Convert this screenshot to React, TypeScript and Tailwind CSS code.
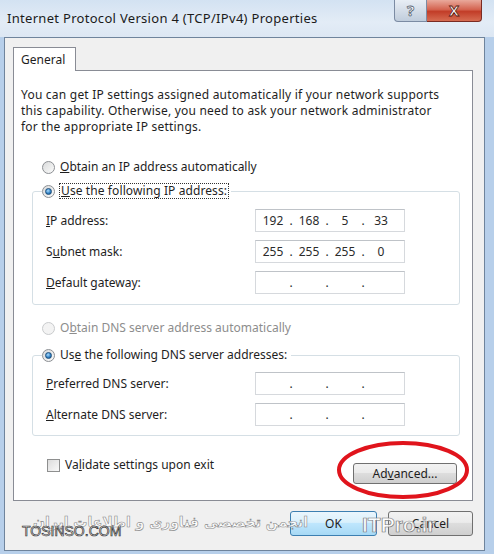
import React from "react";

function Radio({ checked, disabled }: { checked?: boolean; disabled?: boolean }) {
  return (
    <span
      className={
        disabled
          ? "relative inline-block size-[13px] shrink-0 rounded-full border border-[#c9cbcd] bg-[#f3f3f3]"
          : "relative inline-block size-[13px] shrink-0 rounded-full border border-[#8c8f93] bg-[linear-gradient(135deg,#d9dadb,#fbfbfb)]"
      }
    >
      {checked && (
        <span className="absolute left-[2px] top-[2px] size-[7px] rounded-full border border-[#1d4f7c] bg-[radial-gradient(circle_at_40%_35%,#a9dcff,#2c7cc0_60%,#174a78)]" />
      )}
    </span>
  );
}

function IpField({ parts }: { parts: string[] }) {
  return (
    <div className="flex h-[23px] w-[150px] items-center border border-[#d6d9dd] border-t-[#bfc3c8] bg-white pl-[2px] text-[12px] text-[#2b2b2b]">
      {parts.map((p, i) => (
        <React.Fragment key={i}>
          <span className="w-[30px] text-center">{p}</span>
          {i < 3 && <span className="w-[6px] text-center">.</span>}
        </React.Fragment>
      ))}
    </div>
  );
}

function FieldRow({ label, u, rest, parts }: { label: string; u: string; rest: string; parts: string[] }) {
  return (
    <div className="flex h-[23px] items-center">
      <div className="w-[209px] text-[12px] text-[#1e1e1e]">
        {label}
        <span className="underline">{u}</span>
        {rest}
      </div>
      <IpField parts={parts} />
    </div>
  );
}

function WinButton({ children, primary, className }: { children: React.ReactNode; primary?: boolean; className: string }) {
  return (
    <div
      className={
        (primary
          ? "border-[#3c7fb1] bg-[linear-gradient(180deg,#eaf6fd_0%,#d9f0fc_45%,#bee6fd_50%,#a7d9f5_100%)] "
          : "border-[#707070] bg-[linear-gradient(180deg,#f2f2f2_0%,#ebebeb_45%,#dddddd_50%,#cfcfcf_100%)] ") +
        "flex items-center justify-center rounded-[3px] border text-[12px] text-[#1e1e1e] " +
        className
      }
    >
      {children}
    </div>
  );
}

export default function App() {
  const empty = ["", "", "", ""];
  return (
    <div className="relative h-[554px] w-[494px] overflow-hidden bg-[#b7cfea] font-['Noto_Sans',sans-serif]">
      {/* title bar */}
      <div className="flex h-[37px] items-start bg-[linear-gradient(180deg,#d3e2f2_0%,#e3ecf6_60%,#dce7f3_100%)] pl-[4px]">
        <div className="pl-[3px] pt-[9px] text-[13px] tracking-[0.3px] text-[#1b1b1b]">Internet Protocol Version 4 (TCP/IPv4) Properties</div>
        <div className="ml-auto mr-[12px] flex">
          <div className="flex h-[22px] w-[33px] items-center justify-center rounded-bl-[4px] border border-t-0 border-[#7b8ba3] bg-[linear-gradient(180deg,#e8eef5_0%,#d4dde8_50%,#c0cddc_100%)] text-[15px] font-bold text-white [-webkit-text-stroke:0.8px_#5b6674]">
            ?
          </div>
          <div className="flex h-[22px] w-[55px] items-center justify-center rounded-br-[4px] border border-l-0 border-t-0 border-[#7a2b22] bg-[linear-gradient(180deg,#e9a99b_0%,#d46450_45%,#c23d28_55%,#d66c52_100%)] text-[15px] font-bold text-white [-webkit-text-stroke:0.8px_#5a1a12]">
            X
          </div>
        </div>
      </div>

      {/* client area */}
      <div className="ml-[4px] mr-[9px] h-[514px] border border-[#6f849c] bg-[#f0f0f0] pl-[8px] pt-[9px]">
        {/* tab */}
        <div className="relative z-10 -mb-px flex h-[24px] w-[63px] items-start border border-b-0 border-[#898c95] bg-white pl-[7px] pt-[3px] text-[12px] text-[#1e1e1e]">
          General
        </div>

        {/* panel */}
        <div className="h-[431px] w-[460px] border border-[#898c95] bg-white">
          <div className="pl-[7px] pt-[16px] text-[12px] leading-[16px] tracking-[0.22px] text-[#1e1e1e]">
            You can get IP settings assigned automatically if your network supports
            <br />
            this capability. Otherwise, you need to ask your network administrator
            <br />
            for the appropriate IP settings.
          </div>

          <div className="ml-[28px] mt-[24px] flex h-[16px] items-center gap-[5px] text-[12px] text-[#1e1e1e]">
            <Radio />
            <span>
              <span className="underline">O</span>btain an IP address automatically
            </span>
          </div>

          <div className="relative z-10 ml-[28px] mt-[8px] flex h-[16px] w-fit items-center gap-[4px] bg-white pr-[2px] text-[12px] text-[#1e1e1e]">
            <Radio checked />
            <span className="border border-dotted border-[#333] px-[1px] leading-[14px] tracking-[0.1px]">
              <span className="underline">U</span>se the following IP address:
            </span>
          </div>
          <div className="-mt-[8px] ml-[18px] flex h-[114px] w-[428px] flex-col gap-[8px] rounded-[3px] border border-[#d5dfe5] pl-[13px] pt-[17px]">
            <FieldRow label="" u="I" rest="P address:" parts={["192", "168", "5", "33"]} />
            <FieldRow label="S" u="u" rest="bnet mask:" parts={["255", "255", "255", "0"]} />
            <FieldRow label="" u="D" rest="efault gateway:" parts={empty} />
          </div>

          <div className="ml-[28px] mt-[15px] flex h-[16px] items-center gap-[5px] text-[12px] text-[#8d8d8d]">
            <Radio disabled />
            <span>
              O<span className="underline">b</span>tain DNS server address automatically
            </span>
          </div>

          <div className="relative z-10 ml-[28px] mt-[11px] flex h-[16px] w-fit items-center gap-[5px] bg-white pr-[4px] text-[12px] text-[#1e1e1e]">
            <Radio checked />
            <span>
              Us<span className="underline">e</span> the following DNS server addresses:
            </span>
          </div>
          <div className="-mt-[8px] ml-[18px] flex h-[81px] w-[428px] flex-col gap-[8px] rounded-[3px] border border-[#d5dfe5] pl-[13px] pt-[16px]">
            <FieldRow label="" u="P" rest="referred DNS server:" parts={empty} />
            <FieldRow label="" u="A" rest="lternate DNS server:" parts={empty} />
          </div>

          <div className="mt-[21px] flex items-start">
            <div className="ml-[33px] flex h-[16px] items-center gap-[5px] text-[12px] text-[#1e1e1e]">
              <span className="inline-block size-[13px] border border-[#8e8f8f] bg-[linear-gradient(135deg,#dcdcdc,#f9f9f9)]" />
              <span>
                Va<span className="underline">l</span>idate settings upon exit
              </span>
            </div>
            <WinButton className="ml-auto mr-[15px] mt-[6px] h-[21px] w-[104px]">
              <span>
                Ad<span className="underline">v</span>anced...
              </span>
            </WinButton>
          </div>
        </div>

        {/* bottom buttons */}
        <div className="mt-[10px] flex w-[460px] justify-end gap-[11px]">
          <WinButton primary className="h-[25px] w-[87px]">
            OK
          </WinButton>
          <WinButton className="h-[25px] w-[85px]">Cancel</WinButton>
        </div>
      </div>

      {/* red highlight */}
      <svg className="absolute left-[335px] top-[440px]" width="136" height="62" viewBox="0 0 136 62">
        <ellipse cx="68" cy="30" rx="64" ry="27" fill="none" stroke="#e0141c" strokeWidth="4" />
      </svg>

      {/* watermark */}
      <div
        dir="rtl"
        className="absolute left-[18px] top-[512px] w-[290px] whitespace-nowrap text-right font-['DejaVu_Sans',sans-serif] text-[14px] font-bold text-white/80 [-webkit-text-stroke:0.6px_#8a8a8a]"
      >
        انجمن تخصصی فناوری و اطلاعات ایران
      </div>
      <div className="absolute left-[362px] top-[509px] font-['Liberation_Sans',sans-serif] text-[21px] font-bold text-white/80 [-webkit-text-stroke:0.7px_#7a7a7a]">
        ITPro.ir
      </div>
      <div className="absolute left-[22px] top-[521px] font-['Liberation_Sans',sans-serif] text-[14px] text-white [-webkit-text-stroke:0.7px_#333]">
        TOSINSO.COM
      </div>
    </div>
  );
}
